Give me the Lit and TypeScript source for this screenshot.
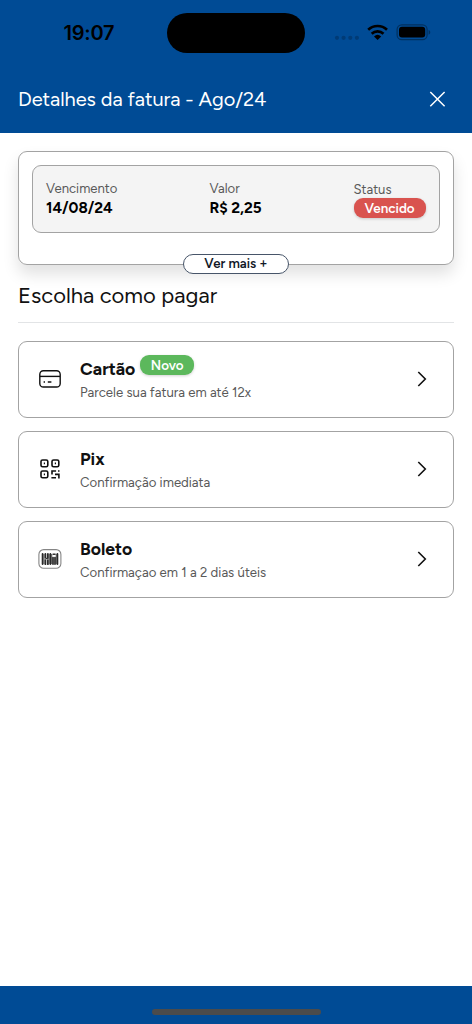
import { LitElement, html, css, svg } from "lit";
import { customElement } from "lit/decorators.js";

const cardIcon = svg`<svg width="22" height="18" viewBox="0 0 22 18" fill="none" stroke="#111" stroke-width="1.4">
  <rect x=".8" y=".8" width="20.4" height="16.2" rx="3.6"/><path d="M1 6.4h20"/>
  <path d="M4.6 12h1.4M8.8 12h3.6" stroke-width="1.5"/></svg>`;

const qrIcon = svg`<svg width="20" height="20" viewBox="0 0 20 20" fill="none" stroke="#111" stroke-width="1.6">
  <rect x="1" y="1" width="6.8" height="6.8" rx="1.6"/><rect x="12" y="1" width="6.8" height="6.8" rx="1.6"/><rect x="1" y="12" width="6.8" height="6.8" rx="1.6"/>
  <path d="M3.8 4.4H5M14.8 4.4H16M3.8 15.4H5M12 15.6V12h4.1M18 12h1.5M15 15.4h3.9V19.6M11.4 18.8h4.6"/></svg>`;

const barcodeIcon = svg`<svg width="24" height="20" viewBox="0 0 24 20" fill="none">
  <rect x=".9" y=".6" width="22" height="18.6" rx="4.8" stroke="#858585" stroke-width="1.1"/>
  <g stroke="#292929" stroke-width="1.8" stroke-linecap="round">
    <path d="M4.6 5v10M7.4 5v3.4M7.4 11.2v4M9.9 5v4M9.9 11.2v4M12.4 5v10M15 8.6v6.4M17 8.6v6.4M19.4 5v10"/>
  </g>
  <path d="M6 5v10M11.1 5v10M13.7 5v10M18.3 5v10M16 8v7" stroke="#555" stroke-width="1.1"/>
  <path d="M7.4 9.5h2.5M14.6 5.2h3" stroke="#333" stroke-width="1.5"/></svg>`;

const options = [
  { key: "card", title: "Cartão", note: "Parcele sua fatura em até 12x", badge: "Novo", icon: cardIcon },
  { key: "pix", title: "Pix", note: "Confirmação imediata", badge: "", icon: qrIcon },
  { key: "slip", title: "Boleto", note: "Confirmaçao em 1 a 2 dias úteis", badge: "", icon: barcodeIcon },
];

@customElement("app-root")
export class AppRoot extends LitElement {
  static styles = css`
    :host { display: flex; flex-direction: column; height: 1024px; background: #fff; color: #111;
      font-family: Figtree, Lato, sans-serif; white-space: nowrap; }
    * { box-sizing: border-box; }
    svg { display: block; flex: none; }
    header { height: 133px; background: #004b95; flex: none; }
    .status { height: 65px; display: grid; grid-template-columns: 167px 138px 1fr; align-items: center; }
    .time { font: 600 20px/24px Inter, sans-serif; color: #000; padding-left: 63.5px; letter-spacing: -.25px; }
    .island { height: 40px; border-radius: 20px; background: #000; }
    .signals { padding-left: 29px; }
    .bar { height: 68px; display: flex; justify-content: space-between; align-items: center; padding: 0 26px 0 18px; }
    h1 { font-size: 20px; line-height: 24px; font-weight: 400; letter-spacing: -.04px; margin: 0; color: #fff; }
    main { flex: 1; padding: 18px 18px 0; }
    .invoice { position: relative; height: 114px; border: 1px solid #a3a3a3; border-radius: 9px; padding: 13px;
      box-shadow: 0 9px 16px rgba(0,0,0,.12); }
    .summary { height: 68px; display: grid; grid-template-columns: 163.5px 144px 1fr; padding: 12px 0 0 13px;
      border: 1px solid #a3a3a3; border-radius: 9px; background: #f4f4f4; }
    .label { font-size: 13.1px; line-height: 21px; height: 20px; color: #595959; }
    .value { font-size: 15.2px; line-height: 20px; font-weight: 700; color: #000; }
    .state { padding-top: 1px; }
    .pill { display: block; height: 20px; line-height: 20px; border-radius: 9px; color: #fff; font-size: 13.4px;
      font-weight: 600; text-align: center; box-shadow: 0 1px 3px rgba(0,0,0,.18); }
    .overdue { width: 72px; margin-top: -1px; background: #d9534f; }
    .fresh { width: 54px; margin: -8px 0 0 5px; background: #5cb85c; }
    .more { position: absolute; left: 164px; bottom: -10px; width: 106px; height: 20px; border: 1px solid #475569; border-radius: 10px;
      background: #fff; color: #111827; font: 600 13.2px/17px Figtree, Lato, sans-serif; padding: 0 0 1px; }
    h2 { margin: 17px 0 18px; height: 41px; border-bottom: 1px solid #e2e4e6; font-size: 22px; line-height: 28px;
      font-weight: 400; }
    .options { display: grid; gap: 13.5px; }
    .option { height: 76.5px; border: 1px solid #a3a3a3; border-radius: 9px; display: grid;
      grid-template-columns: 61px 1fr 37px; align-items: center; }
    .icon { display: flex; justify-content: center; width: 61px; margin-bottom: 1px; }
    .chevron { margin-bottom: 1px; }
    .head { display: flex; align-items: center; height: 25px; padding-top: 1px; }
    .title { font-size: 17.6px; line-height: 24px; font-weight: 700; }
    .note { font-size: 13.2px; line-height: 22px; color: #595959; }
    footer { height: 38px; background: #004b95; display: flex; justify-content: center; padding-top: 23px; flex: none; }
    .home { width: 169px; height: 6px; border-radius: 3px; background: #4b4b4b; }
  `;

  render() {
    return html`
      <header>
        <div class="status">
          <div class="time">19:07</div>
          <div class="island"></div>
          <svg class="signals" width="126" height="24" viewBox="0 0 97 24">
            <g fill="#003b76"><circle cx="3" cy="16.8" r="2.1"/><circle cx="9.6" cy="16.8" r="2.1"/><circle cx="16.3" cy="16.8" r="2.1"/><circle cx="22.9" cy="16.8" r="2.1"/></g>
            <g fill="none" stroke="#000" stroke-width="2.7"><path d="M34.2 8.7a13.8 13.8 0 0 1 18.8 0M37.7 12.7a8.7 8.7 0 0 1 11.8 0"/></g>
            <path d="M40 15.4a5.5 5.5 0 0 1 7.2 0l-3.6 3.5z"/>
            <rect x="63.1" y="3.8" width="30" height="14.8" rx="4.6" fill="none" stroke="#00315f" stroke-width="1.2"/>
            <rect x="65" y="5.8" width="26.2" height="10.6" rx="3"/>
            <path d="M94.6 9c2.2.7 2.2 4 0 4.7z" fill="#00315f"/>
          </svg>
        </div>
        <div class="bar">
          <h1>Detalhes da fatura - Ago/24</h1>
          <svg width="17" height="17" viewBox="0 0 17 17" fill="none" stroke="#fff" stroke-width="1.5"><path d="M1.3 1l14.3 14.3M15.6 1l-14.3 14.3"/></svg>
        </div>
      </header>
      <main>
        <section class="invoice">
          <div class="summary">
            <div><div class="label">Vencimento</div><div class="value">14/08/24</div></div>
            <div><div class="label">Valor</div><div class="value">R$ 2,25</div></div>
            <div class="state"><div class="label">Status</div><span class="pill overdue">Vencido</span></div>
          </div>
          <button class="more">Ver mais +</button>
        </section>
        <h2>Escolha como pagar</h2>
        <div class="options">
          ${options.map((o) => html`
            <div class="option ${o.key}">
              <div class="icon">${o.icon}</div>
              <div>
                <div class="head"><span class="title">${o.title}</span>${o.badge ? html`<span class="pill fresh">${o.badge}</span>` : ""}</div>
                <div class="note">${o.note}</div>
              </div>
              <svg class="chevron" width="12" height="16" viewBox="0 0 12 16" fill="none" stroke="#111" stroke-width="1.6"><path d="M2.3 1l7 7-7 7"/></svg>
            </div>`)}
        </div>
      </main>
      <footer><div class="home"></div></footer>
    `;
  }
}
